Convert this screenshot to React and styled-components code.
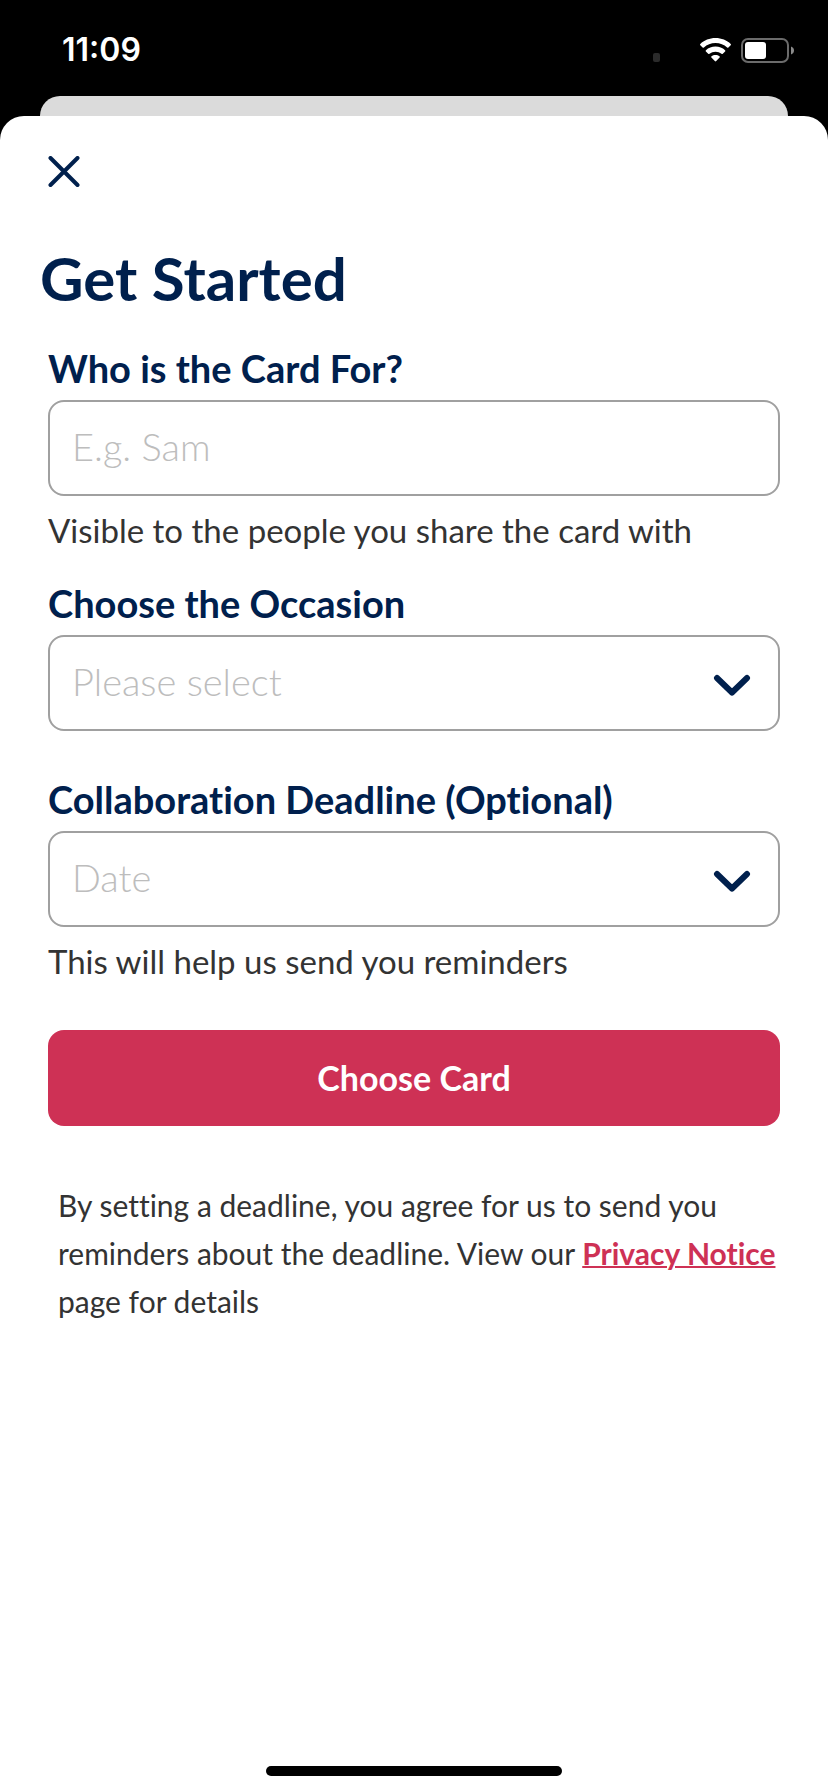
import React from "react";
import styled, { createGlobalStyle } from "styled-components";

const navy = "#00204d";
const red = "#ce3155";

const GlobalStyle = createGlobalStyle`
	* {
		box-sizing: border-box;
	}

	body {
		margin: 0;
		background: #000;
		font-family: Lato, "Open Sans", sans-serif;
		font-variant-ligatures: none;
		color: #333;
	}
`;

const Screen = styled.div`
	min-height: 100vh;
	display: flex;
	flex-direction: column;
`;

const StatusBar = styled.header`
	height: 96px;
	padding: 4px 34px 0 62px;
	display: flex;
	align-items: center;
	justify-content: space-between;
	color: #fff;
	font: 600 32px/40px Inter, sans-serif;
`;

const StatusIcons = styled.div`
	display: flex;
	align-items: center;
	gap: 10px;
`;

const SignalDot = styled.span`
	width: 7px;
	height: 9px;
	margin: 14px 30px 0 0;
	border-radius: 2px;
	background: #2b2b2b;
`;

const PageBehind = styled.div`
	height: 20px;
	margin: 0 40px;
	border-radius: 20px 20px 0 0;
	background: #dbdbdb;
`;

const Sheet = styled.main`
	flex: 1;
	display: flex;
	flex-direction: column;
	padding: 32px 48px 16px;
	border-radius: 24px 24px 0 0;
	background: #fff;
`;

const CloseButton = styled.button`
	align-self: flex-start;
	width: 48px;
	height: 48px;
	margin-left: -8px;
	padding: 0;
	display: grid;
	place-items: center;
	border: 0;
	background: none;
	color: ${navy};
`;

const Title = styled.h1`
	margin: 50px -8px 36px;
	font-size: 60px;
	font-weight: 700;
	line-height: 64px;
	color: ${navy};
`;

const FieldGroup = styled.div`
	display: flex;
	flex-direction: column;
	margin-bottom: ${props => props.$space}px;
`;

const Label = styled.label`
	margin-bottom: 10px;
	font-size: 38px;
	font-weight: 700;
	line-height: 44px;
	color: ${navy};
`;

const Control = styled.div`
	display: grid;
	align-items: center;

	> * {
		grid-area: 1 / 1;
	}

	svg {
		justify-self: end;
		margin: 4px 29px 0 0;
		color: ${navy};
		pointer-events: none;
	}
`;

const Input = styled.input`
	appearance: none;
	width: 100%;
	height: 96px;
	padding: 0 22px 4px;
	border: 2px solid #a0a0a0;
	border-radius: 16px;
	background: #fff;
	font: 300 38px/44px Lato, sans-serif;
	color: #bdbdbd;

	&::placeholder {
		color: #bdbdbd;
		opacity: 1;
	}
`;

const Help = styled.p`
	margin: 14px 0 0;
	font-size: 33px;
	line-height: 40px;
`;

const SubmitButton = styled.button`
	height: 96px;
	border: 0;
	border-radius: 16px;
	background: ${red};
	color: #fff;
	font: 700 34px/40px Lato, sans-serif;
`;

const Terms = styled.p`
	margin: 55px 0 0;
	padding-left: 10px;
	font-size: 30px;
	line-height: 48px;

	a {
		color: ${red};
		font-weight: 700;
		text-decoration-thickness: 2px;
	}
`;

const HomeIndicator = styled.div`
	align-self: center;
	width: 296px;
	height: 10px;
	margin-top: auto;
	border-radius: 5px;
	background: #000;
`;

const WifiIcon = () => (
	<svg width="31" height="24" viewBox="0 0 31 24" fill="currentColor">
		<path d="M15.5 0C21.5 0 26.9 2.2 30.7 5.9c.4.4.4.9 0 1.3L28.4 9.5c-.4.4-.9.4-1.3 0C24.1 6.7 20 5.1 15.5 5.1S6.9 6.7 3.900 9.500c-.4.4-.9.4-1.300 0L.3 7.200c-.4-.4-.4-.9 0-1.300C4.100 2.200 9.500 0 15.500 0z" />
		<path d="M15.500 8.600c3.700 0 7 1.300 9.600 3.600.4.400.4.900 0 1.300l-2.300 2.300c-.4.400-.9.400-1.300 0-1.700-1.300-3.700-2.100-6-2.100s-4.300.8-6 2.100c-.4.400-.9.400-1.300 0l-2.300-2.300c-.4-.4-.4-.9 0-1.300 2.600-2.300 5.900-3.600 9.600-3.600z" />
		<path d="M15.500 17c1.500 0 2.900.5 4 1.300.5.400.5.900.1 1.300l-3.400 3.500c-.4.400-1 .4-1.400 0l-3.400-3.500c-.4-.4-.4-.9.100-1.300 1.100-.8 2.500-1.300 4-1.300z" />
	</svg>
);

const BatteryIcon = () => (
	<svg width="53" height="25" viewBox="0 0 53 25">
		<rect
			x="1"
			y="1"
			width="46"
			height="23"
			rx="6"
			fill="none"
			stroke="#6b6b6b"
			strokeWidth="2"
		/>
		<rect x="4" y="4" width="21" height="17" rx="3" fill="#fff" />
		<path d="M50 8.500c2 .7 3 2.200 3 4s-1 3.300-3 4z" fill="#8a8a8a" />
	</svg>
);

const CloseIcon = () => (
	<svg width="32" height="32" viewBox="0 0 32 32" aria-hidden="true">
		<path
			d="M2.500 2l27 27M29.500 2l-27 27"
			stroke="currentColor"
			strokeWidth="4"
			strokeLinecap="round"
		/>
	</svg>
);

const ChevronIcon = () => (
	<svg width="38" height="22" viewBox="0 0 38 22" aria-hidden="true">
		<path
			d="M4 4l15 14.500L34 4"
			fill="none"
			stroke="currentColor"
			strokeWidth="6"
			strokeLinecap="round"
			strokeLinejoin="round"
		/>
	</svg>
);

const Field = ({ id, label, placeholder, help, select, space }) => (
	<FieldGroup $space={space}>
		<Label htmlFor={id}>{label}</Label>
		<Control>
			{select ? (
				<Input as="select" id={id} defaultValue="">
					<option value="">{placeholder}</option>
				</Input>
			) : (
				<Input id={id} type="text" placeholder={placeholder} />
			)}
			{select && <ChevronIcon />}
		</Control>
		{help && <Help>{help}</Help>}
	</FieldGroup>
);

const App = () => (
	<Screen>
		<GlobalStyle />
		<StatusBar>
			<span>11:09</span>
			<StatusIcons>
				<SignalDot />
				<WifiIcon />
				<BatteryIcon />
			</StatusIcons>
		</StatusBar>
		<PageBehind />
		<Sheet>
			<CloseButton type="button" aria-label="Close">
				<CloseIcon />
			</CloseButton>
			<Title>Get Started</Title>
			<Field
				id="recipient"
				label="Who is the Card For?"
				placeholder="E.g. Sam"
				help="Visible to the people you share the card with"
				space={31}
			/>
			<Field
				id="occasion"
				label="Choose the Occasion"
				placeholder="Please select"
				select
				space={46}
			/>
			<Field
				id="deadline"
				label="Collaboration Deadline (Optional)"
				placeholder="Date"
				help="This will help us send you reminders"
				select
				space={49}
			/>
			<SubmitButton type="button">Choose Card</SubmitButton>
			<Terms>
				By setting a deadline, you agree for us to send you reminders about the
				deadline. View our <a href="#privacy">Privacy Notice</a> page for
				details
			</Terms>
			<HomeIndicator />
		</Sheet>
	</Screen>
);

export default App;
